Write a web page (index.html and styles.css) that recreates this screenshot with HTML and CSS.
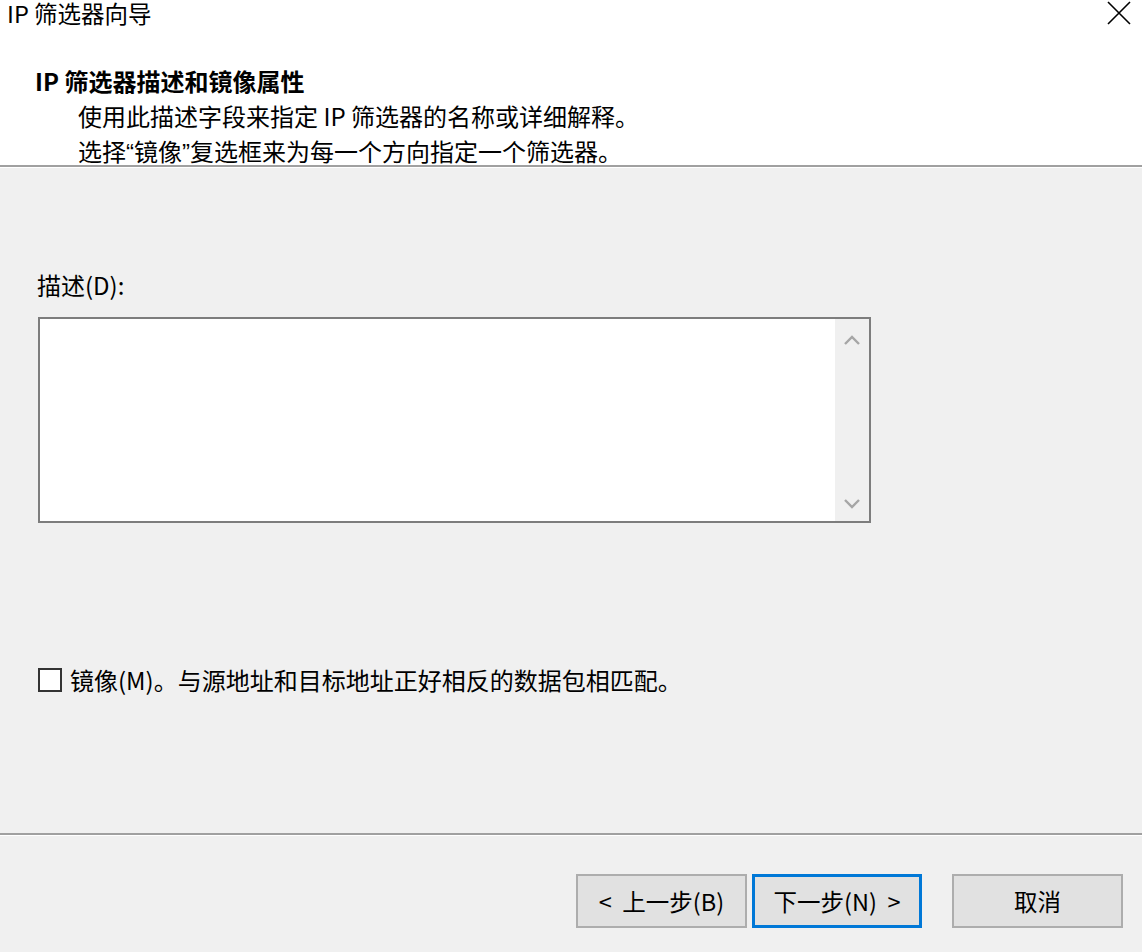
FILE: index.html
```html
<!DOCTYPE html>
<html lang="zh-CN">
<head>
<meta charset="utf-8">
<title>IP 筛选器向导</title>
<link rel="stylesheet" href="styles.css">
</head>
<body>
<div class="dialog">
  <div class="header">
    <div class="titlebar">
      <span class="title">IP 筛选器向导</span>
      <svg class="close" width="24" height="24" viewBox="0 0 24 24"><path d="M1 1 L23 23 M23 1 L1 23" stroke="#000" stroke-width="1.6" fill="none"/></svg>
    </div>
    <div class="heading">IP 筛选器描述和镜像属性</div>
    <div class="desc">使用此描述字段来指定 IP 筛选器的名称或详细解释。</div>
    <div class="desc">选择<span class="q">“</span>镜像<span class="q">”</span>复选框来为每一个方向指定一个筛选器。</div>
  </div>
  <div class="sep"></div>
  <div class="body">
    <div class="label">描述(D):</div>
    <div class="textbox">
      <div class="textarea"></div>
      <div class="scrollbar">
        <svg width="18" height="10" viewBox="0 0 18 10"><path d="M2 9 L9 2 L16 9" stroke="#a6a6a6" stroke-width="2.4" fill="none"/></svg>
        <svg width="18" height="10" viewBox="0 0 18 10"><path d="M2 1 L9 8 L16 1" stroke="#a6a6a6" stroke-width="2.4" fill="none"/></svg>
      </div>
    </div>
    <div class="check-row">
      <span class="checkbox"></span>
      <span class="check-label">镜像(M)。与源地址和目标地址正好相反的数据包相匹配。</span>
    </div>
  </div>
  <div class="sep"></div>
  <div class="footer">
    <button class="btn">&lt;&nbsp; 上一步(B)</button>
    <button class="btn primary">下一步(N) &nbsp;&gt;</button>
    <button class="btn cancel">取消</button>
  </div>
</div>
</body>
</html>
```

FILE: styles.css
```css
* { box-sizing: border-box; }
html, body {
  margin: 0;
  padding: 0;
  background: #f0f0f0;
}
body {
  font-family: "Noto Sans CJK SC", "Microsoft YaHei", sans-serif;
  font-size: 24px;
  color: #000;
}
.dialog {
  width: 1142px;
  height: 952px;
  display: flex;
  flex-direction: column;
}
.header {
  background: #fff;
  height: 165px;
  display: flex;
  flex-direction: column;
}
.titlebar {
  height: 28px;
  display: flex;
  align-items: flex-start;
  justify-content: space-between;
  padding: 0 11px 0 7px;
}
.title {
  line-height: 27px;
  font-size: 23.5px;
}
.close {
  margin-top: 1px;
}
.heading {
  margin-top: 41px;
  margin-left: 35px;
  line-height: 24px;
  font-weight: bold;
}
.desc {
  margin-left: 78px;
  margin-top: 11px;
  line-height: 24px;
}
.q {
  font-family: "Liberation Sans", sans-serif;
}
.sep {
  height: 3px;
  border-top: 2px solid #a0a0a0;
  border-bottom: 1px solid #ffffff;
}
.body {
  height: 665px;
  padding: 105px 0 0 37px;
  display: flex;
  flex-direction: column;
}
.label {
  line-height: 24px;
}
.textbox {
  margin-top: 20px;
  margin-left: 1px;
  width: 833px;
  height: 206px;
  border: 2px solid #7d7d7d;
  background: #fff;
  display: flex;
  padding: 0;
}
.textarea {
  flex: 1;
}
.scrollbar {
  width: 34px;
  background: #f0f0f0;
  display: flex;
  flex-direction: column;
  justify-content: space-between;
  align-items: center;
  padding: 16px 0 12px;
}
.check-row {
  margin-top: 145px;
  margin-left: 1px;
  display: flex;
  align-items: center;
  gap: 8px;
}
.checkbox {
  width: 24px;
  height: 24px;
  border: 2px solid #333;
  background: #fff;
}
.check-label {
  line-height: 24px;
}
.footer {
  flex: 1;
  display: flex;
  justify-content: flex-end;
  align-items: flex-start;
  padding: 38px 19px 0 0;
}
.btn {
  width: 171px;
  height: 54px;
  background: #e1e1e1;
  border: 2px solid #adadad;
  font-family: inherit;
  font-size: 23.5px;
  color: #000;
  padding: 0;
}
.btn + .btn {
  margin-left: 5px;
}
.btn.primary {
  width: 170px;
  border: 3px solid #0078d7;
}
.btn.cancel {
  margin-left: 30px;
}
```
